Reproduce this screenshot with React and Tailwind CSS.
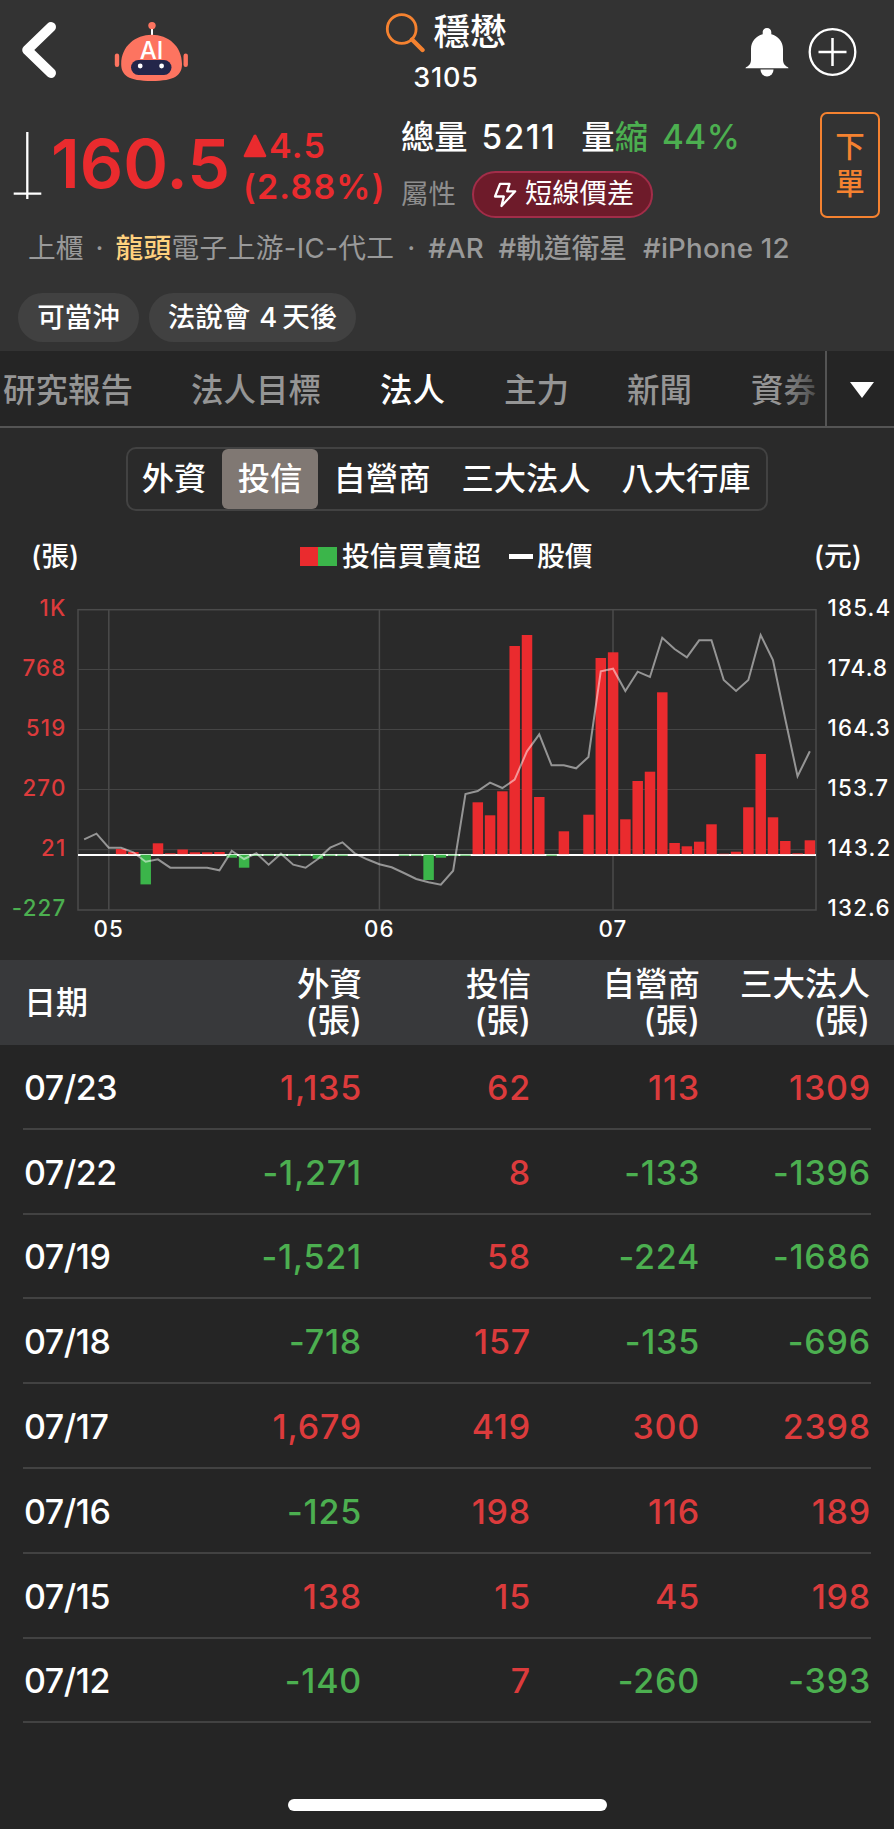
const START_X = 84.15;
const STEP = 12.3;
const ZERO_Y = 855;

// Top (or, for selling days, bottom) edge of each day's bar on the chart canvas.
const BARS = [
  [3, 849], [4, 852], [5, 884.7], [6, 843.3], [7, 853.3], [8, 849.5], [9, 852.3], [10, 852.3], [11, 852],
  [12, 858], [13, 868], [14, 856], [15, 856], [16, 856], [17, 856], [18, 856], [19, 859], [20, 856], [21, 856],
  [26, 856], [27, 856], [28, 880.3], [29, 858], [30, 856], [31, 856], [32, 802.3], [33, 815.3], [34, 791.3],
  [35, 646], [36, 635], [37, 797], [38, 856], [39, 831.3], [41, 814.7], [42, 658], [43, 652.3], [44, 819.3],
  [45, 781], [46, 771.7], [47, 692.3], [48, 843], [49, 846.3], [50, 841.7], [51, 824.3], [52, 853.7],
  [53, 851.7], [54, 807.3], [55, 754], [56, 817.3], [57, 841], [58, 853.3], [59, 840.3],
];

const PRICE = [
  839.3, 833.7, 847.7, 847.7, 852.3, 861.7, 859.3, 867.7, 867.7, 867.7, 867.7, 870.3, 851, 859, 853.3, 864.7,
  853.7, 864.7, 867.7, 859, 847.7, 842.3, 853.3, 859.3, 864.3, 867.3, 873, 879, 882.3, 884.7, 870.7, 794, 791,
  782.7, 788, 779.7, 751.3, 734.3, 765.3, 765.3, 768.3, 757, 671.3, 668.7, 691, 671.7, 677, 637.7, 649, 657.3,
  640.3, 640.3, 680, 691, 680, 635, 660, 719, 776.3, 751.3,
];

const LEFT_AXIS = [['1K', 609.5], ['768', 669.5], ['519', 729.5], ['270', 789.5], ['21', 849.7], ['-227', 909.5]];
const RIGHT_AXIS = ['185.4', '174.8', '164.3', '153.7', '143.2', '132.6'];
const MONTHS = [['05', 108.8], ['06', 379.4], ['07', 613]];

const ROWS = [
  ['07/23', '1,135', '62', '113', '1309'],
  ['07/22', '-1,271', '8', '-133', '-1396'],
  ['07/19', '-1,521', '58', '-224', '-1686'],
  ['07/18', '-718', '157', '-135', '-696'],
  ['07/17', '1,679', '419', '300', '2398'],
  ['07/16', '-125', '198', '116', '189'],
  ['07/15', '138', '15', '45', '198'],
  ['07/12', '-140', '7', '-260', '-393'],
];

function Robot() {
  return (
    <svg width="76" height="62" viewBox="0 0 76 62" className="ml-[58px] mt-[21px]">
      <path d="M38 6v10" stroke="#fff" strokeWidth="2" />
      <circle cx="38" cy="4.6" r="3.7" fill="#fd7460" />
      <rect x="0.8" y="32.5" width="4.4" height="13.5" rx="2.2" fill="#fd7460" />
      <rect x="69.5" y="32.5" width="4.4" height="13.5" rx="2.2" fill="#fd7460" />
      <path d="M37.8 13.7C54 13.7 68 25 68 43c0 11-7 17-30.200 17C14 60 7.200 54 7.200 43c0-18 14.400-29.300 30.600-29.300z" fill="#fd7460" />
      <rect x="17" y="39" width="40.500" height="15" rx="7.500" fill="#23264a" />
      <circle cx="26.200" cy="45" r="2.400" fill="#fff" />
      <circle cx="47.600" cy="45" r="2.400" fill="#fff" />
      <text x="37.500" y="37.800" textAnchor="middle" fill="#fff" className="text-[24px] font-medium">AI</text>
    </svg>
  );
}

function Header() {
  return (
    <div className="flex h-[100px] items-start">
      <div className="flex w-[371px] shrink-0">
        <svg width="36" height="60" viewBox="0 0 36 60" className="ml-[20px] mt-[20px]" fill="none" stroke="#fff" strokeWidth="10" strokeLinecap="round" strokeLinejoin="round">
          <path d="M31 7 7.200 30 31 53" />
        </svg>
        <Robot />
      </div>
      <div className="flex w-[149px] flex-col items-center">
        <div className="mt-[10px] flex h-[45px] items-center gap-[8px]">
          <svg width="41" height="41" viewBox="0 0 41 41" fill="none" stroke="#f58230">
            <circle cx="16.700" cy="17" r="14.400" strokeWidth="2.800" />
            <path d="m27 27.500 10.500 10.500" strokeWidth="4.400" strokeLinecap="round" />
          </svg>
          <span className="whitespace-nowrap text-[36.500px] font-medium leading-[45px]">穩懋</span>
        </div>
        <div className="mt-[1.500px] pl-[1px] text-[27px] font-[550] leading-[42px] tracking-[0.800px]">3105</div>
      </div>
      <div className="flex flex-1 justify-end pr-[37px] pt-[28px]">
        <svg width="44" height="50" viewBox="0 0 44 50" fill="#fff" className="mr-[19px]">
          <path d="M22 0c2.600 0 4.300 1.700 4.300 4.300v2C33 8 38 13.500 38 21v11c0 3 1.500 5.200 3.500 6.500 1.800.8 2 1.500 2 1.800H.5c0-.3.200-1 2-1.800C4.500 37.200 6 35 6 32V21C6 13.500 11 8 17.700 6.300v-2C17.700 1.700 19.400 0 22 0z" />
          <path d="M15.500 41.500h13a6.500 7 0 0 1-13 0z" />
        </svg>
        <svg width="49" height="49" viewBox="0 0 49 49" fill="none" stroke="#fff">
          <circle cx="24.500" cy="24" r="22.800" strokeWidth="2.300" />
          <path d="M10.500 24h28M24.500 10v28" strokeWidth="2.500" />
        </svg>
      </div>
    </div>
  );
}

function Quote() {
  return (
    <div className="flex h-[120px] items-start pl-[13px] pr-[14px]">
      <svg width="30" height="70" viewBox="0 0 30 70" className="mt-[31px] shrink-0" fill="none" stroke="#fff" strokeWidth="2.300">
        <path d="M14.300 1v67M.7 62.600h27.600" />
      </svg>
      <div className="ml-[8px] mt-[23px] w-[189px] whitespace-nowrap text-[68px] font-semibold leading-[80px] text-[#ea2b2e]">160.5</div>
      <div className="w-[158px] whitespace-nowrap pl-[3px] pt-[26px] text-[34px] font-semibold leading-[40px] tracking-[1.200px] text-[#ea2b2e]">
        <div className="flex items-center">
          <svg width="24" height="24" viewBox="0 0 24 24" fill="#ea2b2e" stroke="#ea2b2e" strokeWidth="3" strokeLinejoin="round">
            <path d="M12 2 2.200 21.800h19.600z" />
          </svg>
          <span className="ml-[2px]">4.5</span>
        </div>
        <div className="mt-[1px]">(2.88%)</div>
      </div>
      <div className="flex-1 pl-[3px] pt-[16px]">
        <div className="flex h-[44px] items-center whitespace-nowrap text-[33.300px] font-medium">
          <span>總量</span>
          <span className="ml-[14px] font-[550] tracking-[1.500px]">5211</span>
          <span className="ml-[25px]">量</span>
          <span className="text-[#4caf50]">縮</span>
          <span className="ml-[14px] font-[550] tracking-[0.500px] text-[#4caf50]">44%</span>
        </div>
        <div className="mt-[11px] flex h-[47px] items-center whitespace-nowrap">
          <span className="w-[54px] text-[27.400px] text-[#8e8e8e]">屬性</span>
          <span className="ml-[17px] flex h-[47px] w-[181px] items-center rounded-full border-2 border-[#a22d49] bg-[#6e1b2a] pl-[19px] text-[27.300px]">
            <svg width="24" height="26" viewBox="0 0 24 26" fill="none" stroke="#fff" strokeWidth="2.300" strokeLinejoin="round" className="mr-[8px]">
              <path d="M7 1.800h9.500l-2.300 7.500h8L8.500 24l2.300-9.500H2z" />
            </svg>
            短線價差
          </span>
        </div>
      </div>
      <div className="mt-[12px] flex h-[106px] w-[60px] flex-col items-center justify-center rounded-[7px] border-2 border-[#f58230] text-[29.500px] font-medium leading-[37px] text-[#f58230]">
        <span>下</span>
        <span>單</span>
      </div>
    </div>
  );
}

function Tags() {
  return (
    <div className="h-[131px]">
      <div className="flex h-[56px] items-center whitespace-nowrap pl-[28px] pt-[1px] text-[27.700px] text-[#999]">
        <span>上櫃</span>
        <span className="w-[32px] text-center">·</span>
        <span className="font-medium tracking-[0.400px] text-[#ffd27f]">龍頭</span>
        <span className="tracking-[0.350px]">電子上游-IC-代工</span>
        <span className="w-[34px] text-center">·</span>
        <span className="font-medium">#AR</span>
        <span className="ml-[15px] font-medium">#軌道衛星</span>
        <span className="ml-[16px] font-medium tracking-[0.200px]">#iPhone 12</span>
      </div>
      <div className="mt-[17px] flex gap-[10px] whitespace-nowrap pl-[18px] text-[27.500px] font-medium">
        <span className="flex h-[49px] w-[121px] items-center justify-center rounded-full bg-[#414141]">可當沖</span>
        <span className="flex h-[49px] w-[207px] items-center justify-center rounded-full bg-[#414141]">
          法說會<span className="ml-[9px] mr-[5px]">4</span>天後
        </span>
      </div>
    </div>
  );
}

function Tabs() {
  return (
    <div className="flex h-[77px] border-b-2 border-[#545454] bg-[#252525]">
      <div className="relative flex w-[825px] items-center overflow-hidden whitespace-nowrap pl-[3px] pt-[5px] text-[32.500px] font-medium text-[#959595]">
        <span className="w-[188px]">研究報告</span>
        <span className="w-[189px]">法人目標</span>
        <span className="w-[124px] text-white">法人</span>
        <span className="w-[123px]">主力</span>
        <span className="w-[124px]">新聞</span>
        <span>資券</span>
        <div className="absolute right-0 top-0 h-full w-[46px] bg-linear-to-r from-[#25252500] to-[#252525cc]" />
      </div>
      <div className="flex flex-1 items-center justify-center border-l-2 border-[#545454]">
        <svg width="24" height="16" viewBox="0 0 24 16" fill="#fff" className="ml-[2px] mt-[2px]">
          <path d="M0 0h24L12 16z" />
        </svg>
      </div>
    </div>
  );
}

function Segments() {
  return (
    <div className="mx-auto mt-[19px] flex h-[64px] w-[642px] items-center whitespace-nowrap rounded-[10px] border-2 border-[#424242] text-[32.300px] font-medium">
      <span className="w-[92px] text-center">外資</span>
      <span className="ml-[2px] flex h-[60px] w-[96px] items-center justify-center rounded-[6px] bg-[#807873]">投信</span>
      <span className="w-[128px] text-center">自營商</span>
      <span className="w-[160px] text-center">三大法人</span>
      <span className="w-[160px] text-center">八大行庫</span>
    </div>
  );
}

function Legend() {
  return (
    <div className="mt-[20px] flex h-[50px] items-center whitespace-nowrap pl-[31px] pr-[32px] pt-[1px] text-[27.800px] font-medium">
      <span className="w-[269px]">(張)</span>
      <span className="h-[19px] w-[18px] bg-[#ea2b2e]" />
      <span className="h-[19px] w-[19px] bg-[#3bb54a]" />
      <span className="ml-[5px]">投信買賣超</span>
      <span className="ml-[28px] h-[5px] w-[24px] bg-white" />
      <span className="ml-[4px]">股價</span>
      <span className="ml-auto">(元)</span>
    </div>
  );
}

function Chart() {
  const points = PRICE.map((y, i) => `${START_X + STEP * i},${y}`).join(' ');
  return (
    <svg width="894" height="379" viewBox="0 581 894 379" className="block text-[22.300px] font-[550] tracking-[1.200px]">
      <g stroke="#454545" strokeWidth="1">
        {LEFT_AXIS.slice(1, 5).map(([label, y]) => <path key={label} d={`M78 ${y}H816`} />)}
      </g>
      <g stroke="#4b4b4b" strokeWidth="1.500" fill="none">
        <rect x="78" y="609.700" width="738" height="300.300" />
        {MONTHS.map(([label, x]) => <path key={label} d={`M${x} 610V910`} />)}
      </g>
      <path d={`M78 ${ZERO_Y}H816`} stroke="#fff" strokeWidth="2" />
      {BARS.map(([i, y]) => {
        const up = y < ZERO_Y;
        return (
          <rect
            key={i}
            x={START_X + STEP * i - 5.2}
            y={up ? y : ZERO_Y - 0.3}
            width="10.500"
            height={up ? ZERO_Y - 0.8 - y : y - ZERO_Y}
            fill={up ? '#ea2b2e' : '#3bb54a'}
          />
        );
      })}
      <polyline points={points} fill="none" stroke="#fff" strokeOpacity="0.500" strokeWidth="2" />
      {LEFT_AXIS.map(([label, y]) => (
        <text key={label} x="66.500" y={y + 6.300} textAnchor="end" fill={label === '-227' ? '#4caf50' : '#dc3b3c'}>{label}</text>
      ))}
      {RIGHT_AXIS.map((label, i) => (
        <text key={label} x="827.500" y={615.700 + i * 60.100} fill="#fff">{label}</text>
      ))}
      {MONTHS.map(([label, x]) => (
        <text key={label} x={x} y="937" textAnchor="middle" fill="#fff">{label}</text>
      ))}
    </svg>
  );
}

function Table() {
  return (
    <div className="flex-1 bg-[#252525]">
      <div className="grid h-[85px] grid-cols-[160px_178px_169px_169px_170px] items-center bg-[#38393b] pl-[24px] text-right text-[32.500px] font-medium leading-[36px]">
        <span className="text-left text-[32px]">日期</span>
        {['外資', '投信', '自營商', '三大法人'].map((name) => (
          <span key={name} className="whitespace-nowrap">
            {name}
            <br />
            (張)
          </span>
        ))}
      </div>
      <div className="pl-[23px] pr-[23px]">
        {ROWS.map(([date, ...values]) => (
          <div key={date} className="grid h-[84.800px] grid-cols-[161px_178px_169px_169px_171px] items-center border-b-2 border-[#424242] pt-[2px] text-right text-[34px] font-[550] tracking-[0.800px]">
            <span className="pl-[1px] text-left tracking-[-0.500px]">{date}</span>
            {values.map((value, i) => (
              <span key={i} className={value.startsWith('-') ? 'text-[#4caf50]' : 'text-[#dc3b3c]'}>{value}</span>
            ))}
          </div>
        ))}
      </div>
      <div className="ml-[288px] mt-[76px] h-[12px] w-[319px] rounded-full bg-white" />
    </div>
  );
}

export default function App() {
  return (
    <div className="flex h-[1829px] w-[894px] flex-col overflow-hidden bg-[#2a2a2a] font-['Inter','Noto_Sans_CJK_TC',sans-serif] text-white">
      <div className="h-[351px] shrink-0 bg-[#333]">
        <Header />
        <Quote />
        <Tags />
      </div>
      <Tabs />
      <Segments />
      <Legend />
      <Chart />
      <Table />
    </div>
  );
}
